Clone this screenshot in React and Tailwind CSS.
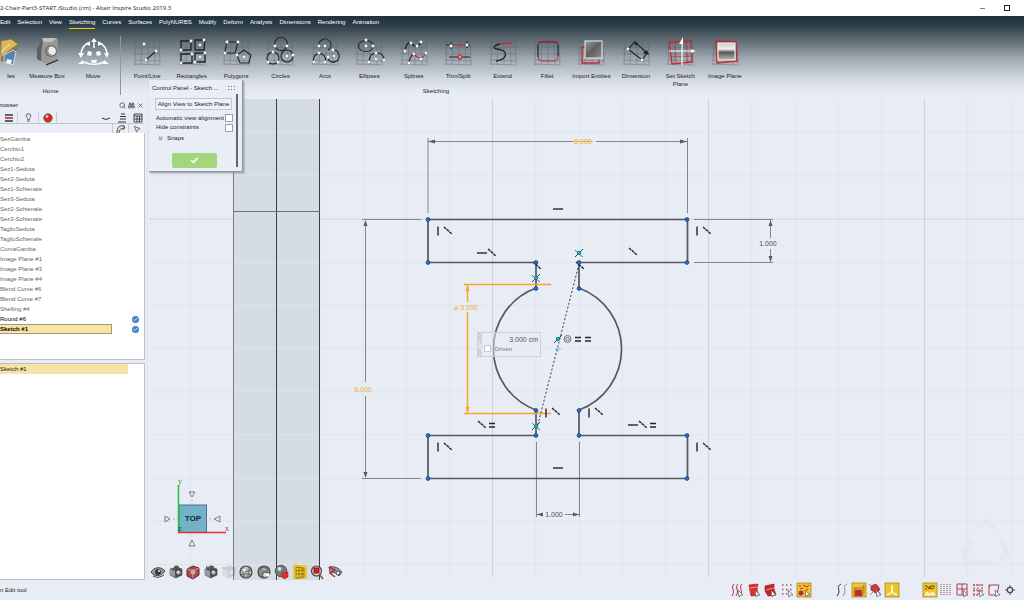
import React from "react";
import { Binoculars, Check, ChevronsDown, Lightbulb, MousePointer2, Search, Minus, X } from "lucide-react";

const menus = [
  "Edit", "Selection", "View", "Sketching", "Curves", "Surfaces", "PolyNURBS",
  "Modify", "Deform", "Analysis", "Dimensions", "Rendering", "Animation",
];

const treeItems = [
  "SezGamba", "Cerchio1", "Cerchio2", "Sez1-Seduta", "Sez2-Seduta", "Sez1-Schienale",
  "Sez3-Seduta", "Sez2-Schienale", "Sez3-Schienale", "TaglioSeduta", "TaglioSchienale",
  "CurvaGamba", "Image Plane #1", "Image Plane #3", "Image Plane #4", "Blend Curve #6",
  "Blend Curve #7", "Shelling #4",
];

const INK = "#1f2428";
const RED = "#c02a35";

/* ---------- ribbon icons ---------- */

function Mesh() {
  return (
    <path
      d="M5 3 4 29M11 3l-1 26M17 3v26M23 3l1 26M28 4l1 24M2 6l28-2M2 12l28-1M2 18h28M3 24l27 1M3 28l27 1"
      stroke="#59636b"
      strokeWidth="0.6"
      opacity="0.65"
    />
  );
}

function Dots({ at, fill = "#fff" }) {
  return at.map(([x, y]) => (
    <rect key={x + "-" + y} x={x - 1.4} y={y - 1.4} width="2.8" height="2.8" rx="0.8" fill={fill} stroke="#555" strokeWidth="0.3" />
  ));
}

function Glyph({ mesh = true, children }) {
  return (
    <svg viewBox="0 0 32 32" className="h-8 w-8" fill="none" stroke={INK} strokeWidth="1.1">
      {mesh && <Mesh />}
      {children}
    </svg>
  );
}

function FilesIcon() {
  return (
    <svg viewBox="0 0 20 32" className="h-8 w-5">
      <path d="M0 5 10 3l7 5-6 17L0 24z" fill="#d8b85a" stroke="#80682a" strokeWidth="0.6" />
      <path d="M0 21 11 12l6-4-1 4-7 16-9-3z" fill="#8b7440" />
      <path d="m3 19 9-5 3 2-3 13-9-3z" fill="#5b83ad" stroke="#e8edf2" strokeWidth="0.8" />
      <path d="m6 23 5 1-1 4-5-1z" fill="#f5f7fa" />
      <path d="M0 16 9 8" stroke="#f0d98d" strokeWidth="1.2" />
    </svg>
  );
}

function MeasureIcon() {
  return (
    <svg viewBox="0 0 32 32" className="h-8 w-8">
      <path d="M11 2h15l1 3v18l-10 5-11-5V13z" fill="#8c8c8c" />
      <path d="M11 2h15l-5 4H12z" fill="#bfbfbf" />
      <path d="m6 13 5-11 1 4-2 9v10l-4-2z" fill="#5f5f5f" />
      <path d="M12 6h9l5-4 1 21-10 5-6-4z" fill="#999" />
      <circle cx="20" cy="15" r="6" fill="#6f6f6f" />
      <circle cx="20.5" cy="15" r="4.4" fill="#ededed" />
      <path d="M18 12a4 4 0 0 0 3 7" stroke="#999" strokeWidth="1.5" fill="none" />
      <path d="m15 29 12-5" stroke="#222" strokeWidth="1.3" />
    </svg>
  );
}

function MoveIcon() {
  return (
    <svg viewBox="0 0 32 32" className="h-8 w-8" fill="none" stroke="#fff" strokeWidth="1.5">
      <path d="M17 12V4M4 19C4 13 7 9 11 7M23 7c4 2 7 6 7 12M7 26c6 3 14 3 20 0" />
      <path d="m14 6 3-4 3 4zM9 8l4-3 0 5zM25 8l-4-3 0 5zM1 17l3 5 3-5zM27 17l3 5 2-5zM1 28l5-4 1 4zM32 28l-5-4-1 4z" fill="#fff" stroke="none" />
      <path d="m11 15 4 1-1 4-4-1zM19 16l4-1 1 4-4 1zM14 24h6l-1 3h-4z" fill="#fff" stroke="none" />
    </svg>
  );
}

const sketchTools = [
  { name: "Point/Line", icon: <Glyph><path d="m15 24 10-9" /><Dots at={[[13, 8], [15, 24], [25, 15]]} /></Glyph> },
  {
    name: "Rectangles",
    icon: (
      <Glyph>
        <path d="M5 5h10v9H5zM19 4h10l-1 10h-9zM5 18h11v9H5zM19 17h10v9H19z" strokeWidth="1.3" />
        <Dots at={[[15, 5], [5, 14], [24, 9], [28, 4], [16, 18], [5, 27], [24, 21], [29, 17], [19, 26]]} />
      </Glyph>
    ),
  },
  {
    name: "Polygons",
    icon: (
      <Glyph>
        <path d="M7 6h11l-3 11H5zM24 14l7 5-2 8h-9l-3-8z" />
        <Dots at={[[7, 6], [18, 6], [5, 17], [24, 21], [17, 19]]} />
      </Glyph>
    ),
  },
  {
    name: "Circles",
    icon: (
      <Glyph>
        <circle cx="17" cy="8" r="6.5" /><circle cx="9" cy="22" r="6" /><circle cx="23" cy="20" r="6" />
        <Dots at={[[11, 10], [23, 10], [9, 16], [4, 26], [14, 26], [23, 20], [29, 19]]} />
      </Glyph>
    ),
  },
  {
    name: "Arcs",
    icon: (
      <Glyph>
        <path d="M10 10a6 6 0 1 1 9 4M5 26a6 6 0 1 1 11 0M24 14a6 6 0 1 1-5 9" />
        <Dots at={[[10, 10], [16, 10], [5, 26], [10, 17], [16, 26], [19, 21], [25, 20], [24, 14]]} />
      </Glyph>
    ),
  },
  {
    name: "Ellipses",
    icon: (
      <Glyph>
        <ellipse cx="13" cy="10" rx="7.5" ry="5.5" /><path d="M16 26c0-12 15-12 15-2" />
        <Dots at={[[13, 10], [13, 4], [20, 10], [16, 26], [23, 23], [23, 17], [31, 24]]} />
      </Glyph>
    ),
  },
  {
    name: "Splines",
    icon: (
      <Glyph>
        <path d="M7 15C8 8 11 5 14 8s6 4 9-2" strokeWidth="1.4" />
        <path d="M11 27c2-9 4-10 7-8" /><path d="M14 20c4-3 6 5 11 1l3-4" stroke={RED} />
        <Dots at={[[7, 15], [13, 7], [19, 10], [23, 6], [11, 27], [16, 18], [23, 23], [28, 17]]} />
      </Glyph>
    ),
  },
  {
    name: "Trim/Split",
    icon: (
      <Glyph>
        <path d="M10 9h14" stroke={RED} /><path d="M4 9h6M24 9h4M9 6v7M25 5v7M7 21h21" />
        <Dots at={[[9, 10], [25, 9]]} />
        <circle cx="18" cy="21" r="2" fill="#d99" stroke={RED} />
      </Glyph>
    ),
  },
  {
    name: "Extend",
    icon: (
      <Glyph>
        <path d="M13 8C7 9 5 12 10 13c12 1 11 10-1 12" strokeWidth="1.3" />
        <path d="m13 8 12-1" stroke={RED} strokeWidth="1.5" />
      </Glyph>
    ),
  },
  {
    name: "Fillet",
    icon: (
      <Glyph>
        <path d="M7 21V9q0-3 4-3h12q4 0 4 3" strokeWidth="1.2" />
        <path d="M27 20q0 5-4 5H11q-4 0-4-4M7 9q0-4 4-4h12q4 0 4 4" stroke={RED} strokeWidth="1" />
        <path d="M27 9v11" strokeWidth="1.2" />
      </Glyph>
    ),
  },
  {
    name: "Import Entities",
    icon: (
      <Glyph>
        <defs>
          <linearGradient id="importFill" x1="0" y1="0" x2="1" y2="1">
            <stop offset="0" stopColor="#9a9a9a" /><stop offset="0.5" stopColor="#606060" /><stop offset="1" stopColor="#8f8f8f" />
          </linearGradient>
        </defs>
        <path d="M10 11H7v16h17v-3" stroke={RED} strokeWidth="1.3" />
        <rect x="10" y="5" width="17" height="17" fill="url(#importFill)" stroke="#e4e4e4" />
      </Glyph>
    ),
  },
  {
    name: "Dimension",
    icon: (
      <Glyph>
        <path d="m8 13 7-7 12 11-5 7z" strokeWidth="1.2" />
        <path d="m13 5 5 2-2 3zM29 19l-6-2 4-3z" fill={INK} stroke="none" />
        <Dots at={[[8, 13], [22, 24]]} />
      </Glyph>
    ),
  },
  {
    name: "Set Sketch Plane",
    icon: (
      <Glyph>
        <path d="m5 6 22-1 1 21-20 2z" stroke={RED} strokeWidth="1.4" />
        <path d="m11 6 1 21M22 6l1 20M6 21l22-1" stroke={RED} strokeWidth="0.7" />
        <path d="M18 29V5M5 15h26" stroke="#fff" strokeWidth="1.2" />
        <path d="m15 8 4-7v7zM31 15l-4-2v4z" fill="#fff" stroke="none" />
      </Glyph>
    ),
  },
  {
    name: "Image Plane",
    icon: (
      <Glyph>
        <defs>
          <linearGradient id="planeFill" x1="0" y1="0" x2="0" y2="1">
            <stop offset="0" stopColor="#c9c9c9" /><stop offset="0.35" stopColor="#f2f2f2" />
            <stop offset="0.55" stopColor="#555" /><stop offset="1" stopColor="#bbb" />
          </linearGradient>
        </defs>
        <path d="m7 5 20 1 1 19-20 2z" stroke={RED} strokeWidth="1.4" />
        <path d="M9 7h17v17H9z" fill="url(#planeFill)" stroke="#f4f1e4" />
      </Glyph>
    ),
  },
];

/* ---------- small icons ---------- */

function Mini({ children, on }) {
  return (
    <svg viewBox="0 0 16 16" className="h-4 w-4" fill="none" stroke="#444" strokeWidth="1">
      {on && <rect x="1" y="1" width="14" height="14" fill="#f0c32a" stroke="#a58a2c" strokeWidth="0.8" />}
      {children}
    </svg>
  );
}

const camera = (
  <>
    <path d="m2 5 4-1 1-2h3l1 2 3 1v6l-6 3-6-3z" fill="#555" stroke="#444" strokeWidth="0.6" />
    <path d="m2 5 5 2v6l-5-2z" fill="#999" stroke="none" />
    <circle cx="10.5" cy="8.5" r="2.8" fill="#aaa" stroke="#333" />
    <circle cx="10" cy="8" r="1" fill="#eee" stroke="none" />
  </>
);

const viewTools = [
  { name: "Visibility", icon: <Mini><path d="M1 8c3-5 10-6 14-1-4 6-11 6-14 1z" fill="#999" stroke="#444" /><circle cx="8" cy="8" r="2.6" fill="#333" /><circle cx="9" cy="7" r="1" fill="#eee" stroke="none" /><path d="M3 12q5 3 11-1" /></Mini> },
  { name: "Save view", icon: <Mini>{camera}</Mini> },
  { name: "Fit view", icon: <Mini><path d="m2 5 6-3 6 2v7l-6 4-6-3z" fill="#a44b4b" stroke="#6b2a2a" /><path d="m2 5 6 2 6-3M8 7v7" stroke="#d99" /><circle cx="8" cy="8" r="2.5" fill="#d7a5a0" stroke="none" /></Mini> },
  { name: "Views", icon: <Mini>{camera}<path d="m3 3 3 3M3 3h3" /></Mini> },
  { name: "Ghost view", icon: <Mini><g opacity="0.2">{camera}<path d="M1 4h14" strokeWidth="2" /></g></Mini> },
  { name: "Wire shading", icon: <Mini><circle cx="8" cy="8" r="6" fill="#bbb" strokeWidth="1.2" /><path d="M3 6q5 3 10 0M5 3q-1 6 2 11M11 3q1 6-2 11M3 11q5-3 10 0" stroke="#555" strokeWidth="0.8" /><circle cx="6" cy="6" r="1.6" fill="#f2f2f2" stroke="none" /></Mini> },
  { name: "Materials", icon: <Mini><circle cx="8" cy="8" r="6" fill="#888" strokeWidth="1.2" /><path d="M4 5q4-3 8 1M8 8l5 1-3 5-4-2z" fill="#ddd" stroke="#555" /><circle cx="12" cy="11" r="1.8" fill="#fff" stroke="none" /></Mini> },
  { name: "Shading", icon: <Mini><circle cx="7" cy="7" r="5.8" fill="#777" stroke="#555" /><circle cx="5.5" cy="5" r="2" fill="#ddd" stroke="none" /><path d="m8 9 6-1v5l-4 2-2-2z" fill="#e02c2c" stroke="#a11" strokeWidth="0.5" /></Mini> },
  { name: "Grid", icon: <Mini><path d="m2 1 12 1v12L2 15z" fill="#fbd01e" stroke="#e3b90c" /><path d="m4 3 8 1v9l-8 1zM7 3v10M10 4v9M4 7l8-1M4 10h8" stroke="#54460f" strokeWidth="0.6" /></Mini> },
  { name: "Zoom area", icon: <Mini><circle cx="7.5" cy="7" r="5" fill="#ddd" strokeWidth="1.2" /><rect x="5" y="4" width="5" height="5" fill="#e01f1f" stroke="#811" /><path d="m11 11 3 4" stroke="#8a6a3c" strokeWidth="1.8" /></Mini> },
  { name: "Section cut", icon: <Mini><path d="M2 3c6-1 10 1 13 5l-3 4c-2-3-5-4-9-4z" fill="#999" stroke="#555" /><path d="m2 3 6 3-5 3 5 4" stroke="#a33" strokeWidth="1.6" /><circle cx="11" cy="9" r="2" fill="#eee" /></Mini> },
];

const cursor = <path d="m9 8 5 5h-2.5L10 15z" fill="#fff" stroke="#555" strokeWidth="0.7" />;
const redDots = (
  <path d="M3 3h1.5M7 3h1.5M11 3h1.5M3 7.5h1.5M7 7.5h1.5M11 7.5h1.5M3 12h1.5M7 12h1.5M11 12h1.5" stroke="#b84a55" strokeWidth="1.6" />
);

const filterGroups = [
  {
    width: "w-[83px] grid-cols-5",
    items: [
      ["Curves filter", <Mini><path d="M5 2c-4 4 2 6-2 12M9 2c-4 4 2 6-2 12M13 2c-4 4 2 6-2 12" stroke={RED} />{cursor}</Mini>],
      ["Faces filter", <Mini><path d="m3 3 9-1-1 6 2 5-8 1-1-5z" fill="#dd2f32" stroke="#a11" strokeWidth="0.6" /><path d="m4 6 8-1" stroke="#f59a92" />{cursor}</Mini>],
      ["Parts filter", <Mini><path d="m3 4 9-2v5l2 6-8 1-3-5z" fill="#c8262a" stroke="#811" strokeWidth="0.6" /><path d="m4 8 8-2" stroke="#f08a85" />{cursor}</Mini>],
      ["Points filter", <Mini>{redDots}{cursor}</Mini>],
      ["All filter", <Mini on><circle cx="5" cy="11" r="2.5" fill={RED} stroke="none" /><path d="M3 4h2M7 3l4 2 2-2M4 7l3-1M10 8l2-1" stroke={RED} />{cursor}</Mini>],
    ],
  },
  {
    width: "w-[66px] grid-cols-4",
    items: [
      ["Curve snap", <Mini><path d="M7 2C1 5 8 8 3 14" stroke="#333" /><path d="M13 2c-6 3 1 6-4 12" stroke="#8a9095" /></Mini>],
      ["Body snap", <Mini on><path d="M3 6h8l2-3v8l-2 3H3z" fill="#d0a032" stroke="#86671a" strokeWidth="0.6" /><path d="M4 8h7v6H4z" fill={RED} stroke="none" /></Mini>],
      ["Vertex snap", <Mini><path d="m4 4 5-2 4 5-3 5-6-4z" fill="#d9303a" stroke="#a11" strokeWidth="0.6" /><path d="m2 2 12 10M3 13l9-9" stroke="#777" strokeWidth="0.8" />{cursor}</Mini>],
      ["Plane snap", <Mini on><path d="M8 3v6" stroke="#fff" strokeWidth="1.5" /><path d="m3 13 4-2M13 13l-4-2" stroke="#fff7c8" strokeWidth="1.5" /><circle cx="8" cy="10" r="1.2" fill="#fff" stroke="none" /></Mini>],
    ],
  },
  {
    width: "w-24 grid-cols-6",
    items: [
      ["Coordinates", <Mini on><path d="M3 4h2l2 3 2-3h4M7 4l2 3 3-1M3 7h2" stroke="#5a4a0c" /><path d="m3 13 2-3 3 2 3-2 2 3z" stroke="#fff" fill="#f7e08a" /></Mini>],
      ["Grid snap", <Mini><path d="M3 2v12M6 2v12M9 2v12M12 2v12" stroke="#9b6068" strokeWidth="1.2" strokeDasharray="1 1" /></Mini>],
      ["Window select", <Mini><path d="M3 2h10v11H3zM8 2v11M3 7h10" stroke="#b33c48" />{cursor}</Mini>],
      ["Cross select", <Mini><path d="M3 3h10M3 8h10M4 2v11M8 2v11M12 2v11M3 13h6" stroke="#b33c48" strokeDasharray="2 1" />{cursor}</Mini>],
      ["Free select", <Mini><path d="M3 3h10l-2 10H3zM3 3l1 2" stroke="#b33c48" />{cursor}</Mini>],
      ["Settings", <Mini><circle cx="8" cy="8" r="2.6" stroke="#444" strokeWidth="1.2" /><path d="M8 3v3M8 10v3M3 8h3M10 8h3" stroke="#444" /></Mini>],
    ],
  },
];

/* ---------- ribbon ---------- */

function Tool({ name, icon, className = "" }) {
  return (
    <button className={"flex flex-col items-center " + className}>
      {icon}
      <span className="mt-1 leading-2">{name}</span>
    </button>
  );
}

function Ribbon() {
  return (
    <header className="h-[82px] bg-[linear-gradient(#1f323d_0px,#2a3b45_8px,#48555d_17px,#727e85_30px,#9ea6b0_42px,#bcc3cb_54px,#d5dde6_65px,#e6eaf0_75px,#e8edf5_82px)]">
      <nav className="flex gap-[7px] text-white">
        {menus.map((m) => (
          <a
            key={m}
            href="#"
            className={"border-b py-0.5 leading-2 " + (m === "Sketching" ? "border-yellow-400" : "border-transparent")}
          >
            {m}
          </a>
        ))}
      </nav>
      <div className="mt-[7px] flex">
        <section className="flex w-[121px] flex-col border-r border-[#8d979f] pl-px">
          <div className="flex h-[51px] items-start">
            <Tool name="les" icon={<FilesIcon />} className="w-5" />
            <Tool name="Measure Box" icon={<MeasureIcon />} className="w-13" />
            <Tool name="Move" icon={<MoveIcon />} className="w-10" />
          </div>
          <h2 className="pr-5 text-center leading-2">Home</h2>
        </section>
        <section className="ml-1 flex w-[622px] flex-col">
          <div className="grid h-[51px] grid-cols-14 items-start">
            {sketchTools.map((t) => (
              <Tool key={t.name} {...t} />
            ))}
          </div>
          <h2 className="text-center leading-2">Sketching</h2>
        </section>
      </div>
    </header>
  );
}

/* ---------- model browser ---------- */

function Visible() {
  return (
    <span className="mr-[5px] flex h-[7px] w-[7px] items-center justify-center rounded-full bg-[#3c82d6] text-white">
      <Check size={5} strokeWidth={4} />
    </span>
  );
}

function Browser() {
  return (
    <aside className="flex w-[145px] shrink-0 flex-col bg-[#e8edf5] text-[#666]">
      <div className="flex h-3.5 items-center gap-0.5 pr-px text-[#222]">
        <h2 className="mr-auto">rowser</h2>
        <button aria-label="Search"><Search size={7} /></button>
        <button aria-label="Find"><Binoculars size={7} /></button>
        <button aria-label="Close"><X size={7} /></button>
      </div>
      <div className="flex h-[11px] items-center text-[#333]">
        <button aria-label="Model" className="flex h-full w-[18px] items-center justify-center border-r border-[#c6ccd4]">
          <svg viewBox="0 0 10 10" className="h-2.5 w-2.5" strokeWidth="1.6"><path d="M1 2h8M1 8h8" stroke="#333" /><path d="M1 5h8" stroke={RED} /></svg>
        </button>
        <button aria-label="Lights" className="flex h-full w-[21px] items-center justify-center border-r border-[#c6ccd4]">
          <Lightbulb size={9} />
        </button>
        <button aria-label="Materials" className="flex h-full w-[18px] items-center justify-center border-r border-[#c6ccd4]">
          <svg viewBox="0 0 10 10" className="h-2.5 w-2.5"><circle cx="5" cy="5" r="4.2" fill="#d52a1e" stroke="#555" strokeWidth="0.8" /><circle cx="4" cy="3.5" r="1.4" fill="#fbb" /></svg>
        </button>
        <div className="ml-auto flex gap-1.5 pr-0.5">
          <svg viewBox="0 0 10 10" className="h-2.5 w-2.5" fill="none" stroke="currentColor"><path d="M1 5q4 3 8 0" /></svg>
          <svg viewBox="0 0 10 10" className="h-2.5 w-2.5" fill="none" stroke="currentColor"><path d="M4 1h4M3 3.5h6M3 6h6M1 9h8" strokeWidth="1.2" /></svg>
          <svg viewBox="0 0 10 10" className="h-2.5 w-2.5" fill="none" stroke="currentColor"><path d="M1 1h8v8H1zM1 3h8M4 3v6M6.500 3v6M1 6h8" strokeWidth="0.9" /></svg>
        </div>
      </div>
      <div className="mr-px flex h-2.5 justify-end border-t border-[#bfc5cc] bg-[#e9eef5] text-[#333]">
        <button aria-label="Show" className="flex w-4 items-center justify-center border-l border-[#c6ccd4]">
          <svg viewBox="0 0 10 10" className="h-2.5 w-2.5" fill="none" stroke="currentColor" strokeWidth="0.9"><path d="M1 9c0-6 3-8 7-7M3 9c0-3 2-5 5-5M7 1l2 2-2 3" /></svg>
        </button>
        <button aria-label="Pick" className="flex w-4 items-center justify-center border-l border-[#c6ccd4]"><MousePointer2 size={8} /></button>
      </div>
      <ul className="h-[227px] border-r border-b border-[#b9c0c8] bg-white pt-px">
        {treeItems.map((t) => (
          <li key={t} className="h-2.5 leading-[10px]">{t}</li>
        ))}
        <li className="flex h-2.5 items-center justify-between leading-[10px] text-black">Round #6<Visible /></li>
        <li className="flex h-2.5 items-center justify-between font-bold text-black">
          <span className="w-28 border border-l-0 border-[#a8986c] bg-[#f6e3a8] leading-2">Sketch #1</span>
          <Visible />
        </li>
      </ul>
      <ul className="mt-[3px] grow border-t border-r border-b border-[#b9c0c8] bg-white">
        <li className="w-32 bg-[#f6e3a8] leading-[10px] text-[#222]">Sketch #1</li>
      </ul>
    </aside>
  );
}

/* ---------- sketch canvas ---------- */

const columns = Array.from({ length: 60 }, (_, i) => 147 + i * 43.2);
const rows = Array.from({ length: 40 }, (_, i) => 132.6 + i * 43.2);

const nodes = [
  [428, 219], [687, 219], [428, 262], [687, 262], [536, 262], [579, 262], [536, 288], [579, 288],
  [536, 410], [579, 410], [536, 435], [579, 435], [428, 435], [687, 435], [428, 478], [687, 478],
];

// constraint marks: v = vertical, h = horizontal, c = coincident, e = equal
const marks = [
  ["v", 438, 231], ["c", 448, 231], ["h", 482, 253], ["c", 492, 253], ["h", 558, 209], ["c", 633, 252],
  ["v", 697, 231], ["c", 707, 231], ["v", 546, 413], ["c", 556, 412], ["v", 589, 413], ["c", 599, 412],
  ["c", 482, 425], ["e", 492, 425], ["h", 633, 425], ["c", 643, 425], ["e", 653, 425], ["v", 438, 447],
  ["c", 448, 447], ["v", 697, 447], ["c", 707, 447], ["h", 558, 468], ["e", 578, 339], ["e", 588, 339],
  ["c", 537, 266], ["c", 580, 266],
];

const markPaths = {
  v: "M0-4.500v9",
  h: "M-5 0h10",
  c: "m-4-4 8 7",
  e: "M-3-1.500h6M-3 2h6",
};

function Tangent({ x, y, arms = true }) {
  return (
    <g transform={`translate(${x} ${y})`} fill="none" stroke="#158a92" strokeWidth="1">
      <path d="m-4 4 8-8" stroke="#33383d" />
      {arms && <path d="m-4-3 3 3 5 4" />}
      <circle r="1.700" fill="#2fa5ad" />
    </g>
  );
}

function Sketch() {
  return (
    <svg className="absolute inset-0 h-full w-full" fontFamily="Liberation Sans, sans-serif" fontSize="7">
      {/* drawing units are window pixels, shifted by the browser width and the ribbon height */}
      <g transform="translate(-145 -98)" fill="none">
        <rect x="233" y="99" width="87" height="481" fill="#d5dce4" />
        <g strokeWidth="1">
          {columns.map((x, i) => (
            <path key={x} d={`M${x} 99V577`} stroke={i % 5 === 3 ? "#cbd0d9" : "#dfe4eb"} />
          ))}
          {rows.map((y, i) => (
            <path key={y} d={`M149 ${y}H3000`} stroke={i === 2 ? "#d0d6dd" : "#dfe4eb"} />
          ))}
        </g>
        <path d="M233.500 99V580" stroke="#777f87" />
        <path d="M276.500 99V580M319.500 99V580" stroke="#3b4045" />
        <path d="M233 211.500H320" stroke="#6c7278" />

        {/* dimensions */}
        <g stroke="#80868c">
          <path d="M428 138V213M687.500 138V213M428 141.500H573M596 141.500H687M365.500 222V382M365.500 396V476M362 219.500H421M362 478.500H421" />
          <path d="M694 219.500H773M694 262.500H773M770.500 220V238M770.500 249V262M536.500 442V517M579.500 442V517M537 514.500H543M565 514.500H579" />
        </g>
        <g fill="#555b60">
          <path d="m428 141.500 7-2v4zM687 141.500l-7-2v4zM365.500 220l-2 6h4zM365.500 478l-2-6h4zM770.500 220l-2 6h4zM770.500 262l-2-6h4zM537 514.500l6-2v4zM579 514.500l-6-2v4z" />
        </g>
        <path d="M573 141.500h20" stroke="#f5b53c" />
        <g textAnchor="middle" fill="#f0ab30">
          <text x="583" y="144">8.000</text>
          <text x="363" y="392">6.000</text>
          <text x="466" y="310">⌀ 3.000</text>
        </g>
        <g textAnchor="middle" fill="#4a4f55">
          <text x="768" y="246">1.000</text>
          <text x="554" y="517">1.000</text>
        </g>

        {/* profile */}
        <g stroke="#55585e" strokeWidth="1.7">
          <path d="M536 262.500H428V219.500H687.500V262.500H579V288A65 65 0 0 1 579 410V435.500H687.500V478.500H428V435.500H536V410A65 65 0 0 1 536 288Z" />
        </g>
        <g stroke="#f5a52a" strokeWidth="1.5">
          <path d="M464 284.500H551M464 413.500H551M467.500 286V302M467.500 312V412" />
          <path d="m467.500 285-1.500 6h3zM467.500 413l-1.500-6h3z" fill="#f5a52a" strokeWidth="0.6" />
        </g>
        <path d="M579 264 537 428" stroke="#33383d" strokeDasharray="2 2" />
        <g stroke="#22262b" strokeWidth="1.4">
          {marks.map(([kind, x, y]) => (
            <path
              key={kind + x + "-" + y}
              d={markPaths[kind]}
              transform={`translate(${x} ${y})`}
              strokeDasharray={kind === "c" ? "3 0.6" : undefined}
            />
          ))}
        </g>
        <g fill="#2f6fbe" stroke="#173f7d" strokeWidth="0.8">
          {nodes.map(([x, y]) => (
            <circle key={x + "-" + y} cx={x} cy={y + 0.5} r="1.9" />
          ))}
        </g>
        <Tangent x={579} y={253} />
        <Tangent x={536} y={278} />
        <Tangent x={536} y={426} />
        <Tangent x={558} y={339} arms={false} />
        <path d="M558 346v6M555 349h6" stroke="#7fc0ea" />
        <circle cx="567.500" cy="339" r="3.500" stroke="#70757b" />
        <circle cx="567.500" cy="339" r="1.700" stroke="#70757b" />

        {/* view cube */}
        <path d="M192 499v39M173 519h39" stroke="#b4bac2" strokeDasharray="2 2" />
        <rect x="179" y="505" width="27.500" height="27.500" fill="#73b2c8" stroke="#4f7585" />
        <path d="M178.500 533V485" stroke="#1fc73a" strokeWidth="1.500" />
        <path d="M178 532.500H226" stroke="#e03030" strokeWidth="1.500" />
        <path d="M189 492h6l-3 5zM189 546h6l-3-6zM165 516v6l5-3zM220 516v6l-6-3z" stroke="#5c6268" strokeWidth="0.8" />
        <text x="193" y="521" textAnchor="middle" fontSize="8" fontWeight="bold" fill="#14242b">TOP</text>
        <g fontFamily="Liberation Serif, serif" fontSize="8">
          <text x="178" y="484" fill="#1fa535">y</text>
          <text x="225" y="531" fill="#c92b2b">x</text>
          <text x="178" y="531" fill="#1c3c78">z</text>
        </g>

        {/* watermark */}
        <path d="m977 527 9-6 9 8M1001 538l6 16-8 8M993 562h-28l-2-10 8-11" stroke="#e5e7ed" strokeWidth="4" />
      </g>
    </svg>
  );
}

function ValueBox() {
  return (
    <form className="absolute top-[234px] left-[332px] flex h-[25px] w-16 border border-[#cbd0d6] bg-[#e8edf5]/50 text-[#777]">
      <span className="w-1.5 bg-[repeating-linear-gradient(45deg,#c3c8ce_0px_1px,transparent_1px_2px)]" />
      <div className="flex grow flex-col">
        <input aria-label="Diameter" defaultValue="3.000 cm" className="h-3 w-full pr-0.5 text-right text-[7px] text-[#555]" />
        <label className="flex items-center gap-1 pl-0.5">
          <input type="checkbox" className="h-[7px] w-[7px] appearance-none border border-[#c5cad0] bg-white" />
          Driven
        </label>
      </div>
    </form>
  );
}

function ControlPanel() {
  const box = "h-2 w-2 appearance-none border border-[#9aa1a8] bg-white";
  return (
    <section className="absolute -top-[18px] left-1 z-10 flex h-[92px] w-[94px] border-r border-b border-[#9299a2] bg-[#e9edf5] pr-1 text-[#1c1c1c] shadow-[1px_1px_2px_#8a919b]">
      <div className="flex grow flex-col pt-1 pl-[3px]">
        <h2 className="flex items-center justify-between leading-2">
          Control Panel - Sketch ...
          <span className="h-1.5 w-[9px] bg-[radial-gradient(#666_30%,transparent_45%)] bg-size-[3px_3px]" />
        </h2>
        <button className="mt-1.5 ml-[3px] w-[77px] border border-[#bfc5cd] bg-[#eef1f7] leading-[10px] whitespace-nowrap">
          Align View to Sketch Plane
        </button>
        <label className="mt-[3px] ml-1 flex w-[77px] items-center justify-between leading-[10px] whitespace-nowrap">
          Automatic view alignment
          <input type="checkbox" className={box} />
        </label>
        <label className="ml-1 flex w-[77px] items-center justify-between leading-[9px]">
          Hide constraints
          <input type="checkbox" className={box} />
        </label>
        <button className="mt-0.5 ml-[5px] flex items-center gap-[3px] leading-[9px]">
          <ChevronsDown size={7} />Snaps
        </button>
        <button aria-label="OK" className="mt-2.5 ml-5 flex h-[15px] w-[45px] items-center justify-center rounded-xs bg-[#a3d77d] text-white">
          <Check size={9} strokeWidth={4} />
        </button>
      </div>
      <span className="mt-3.5 mb-1 w-0.5 bg-[#62666d]" />
    </section>
  );
}

function Viewport() {
  return (
    <main className="relative flex min-h-[482px] grow flex-col justify-end">
      <Sketch />
      <ValueBox />
      <ControlPanel />
      <div className="relative ml-1 grid w-[195px] grid-cols-11 justify-items-center">
        {viewTools.map((t) => (
          <button key={t.name} aria-label={t.name}>{t.icon}</button>
        ))}
      </div>
    </main>
  );
}

function StatusBar() {
  return (
    <footer className="flex h-5 items-center gap-[22px] pr-1.5 text-[#222]">
      <p className="mr-auto">n Edit tool</p>
      {filterGroups.map((g) => (
        <div key={g.width} className={"grid justify-items-center " + g.width}>
          {g.items.map(([name, icon]) => (
            <button key={name} aria-label={name}>{icon}</button>
          ))}
        </div>
      ))}
    </footer>
  );
}

export default function App() {
  return (
    <div className="flex min-h-screen flex-col overflow-hidden bg-[#e8edf5] font-['Liberation_Sans',Arial,sans-serif] text-[6px] leading-none text-[#1c1c1c]">
      <div className="flex h-4 items-center bg-white">
        <h1 className="mr-auto font-['Open_Sans',sans-serif]">2-Chair-Part3-START.iStudio (cm) - Altair Inspire Studio 2019.3</h1>
        <button aria-label="Minimize" className="mr-[18px]"><Minus size={7} /></button>
        <button aria-label="Maximize" className="mr-3.5 h-1.5 w-1.5 border border-[#222]" />
      </div>
      <Ribbon />
      <div className="flex grow">
        <Browser />
        <Viewport />
      </div>
      <StatusBar />
    </div>
  );
}
